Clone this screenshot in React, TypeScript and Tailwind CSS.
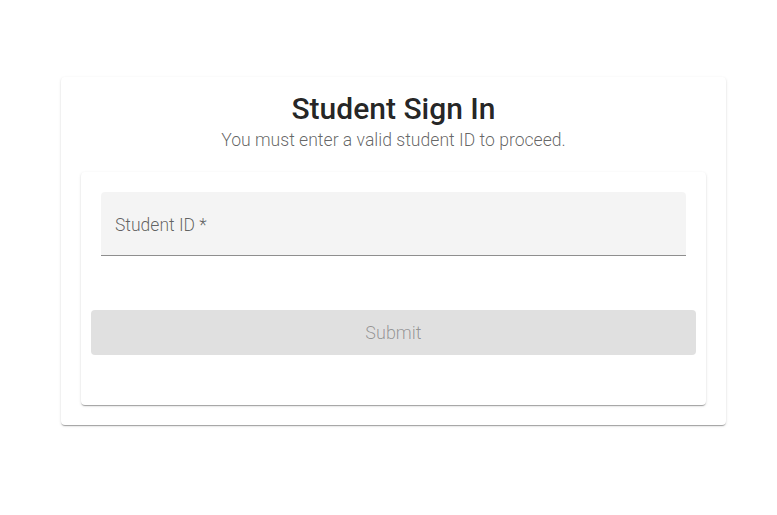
import { useState } from "react";

const paper =
  "bg-white rounded-[4px] shadow-[0px_2px_1px_-1px_rgba(0,0,0,0.2),0px_1px_1px_0px_rgba(0,0,0,0.14),0px_1px_3px_0px_rgba(0,0,0,0.12)]";

const App = () => {
  const [studentId, setStudentId] = useState("");

  return (
    <div
      className="min-h-[515px] w-full bg-white pt-[77px]"
      style={{ fontFamily: "Roboto, 'Liberation Sans', sans-serif" }}
    >
      <div className={`${paper} ml-[61px] w-[665px] px-[20px] pt-[14px] pb-[20px]`}>
        {/* heading */}
        <div className="flex flex-col items-center">
          <h1 className="text-[30px] leading-[36px] font-medium text-[rgba(0,0,0,0.87)]">
            Student Sign In
          </h1>
          <p className="mt-[1px] text-[17.6px] leading-[24px] font-light text-[rgba(0,0,0,0.62)]">
            You must enter a valid student ID to proceed.
          </p>
        </div>

        {/* form */}
        <div className={`${paper} mt-[20px] pt-[20px] px-[10px] pb-[50px]`}>
          <div className="px-[10px]">
            <label className="flex h-[64px] items-center rounded-t-[4px] border-b border-[rgba(0,0,0,0.42)] bg-[rgba(0,0,0,0.045)] px-[14px] pt-[4px]">
              <input
                value={studentId}
                onChange={(e) => setStudentId(e.target.value)}
                placeholder="Student ID *"
                className="w-full bg-transparent text-[17.5px] font-light text-[rgba(0,0,0,0.87)] outline-none placeholder:text-[rgba(0,0,0,0.62)]"
              />
            </label>
          </div>
          <button
            disabled={!studentId}
            className="mt-[54px] flex h-[45px] w-full items-center justify-center rounded-[4px] bg-[#e0e0e0] text-[18px] font-light text-[rgba(0,0,0,0.35)]"
          >
            Submit
          </button>
        </div>
      </div>
    </div>
  );
};

export default App;
